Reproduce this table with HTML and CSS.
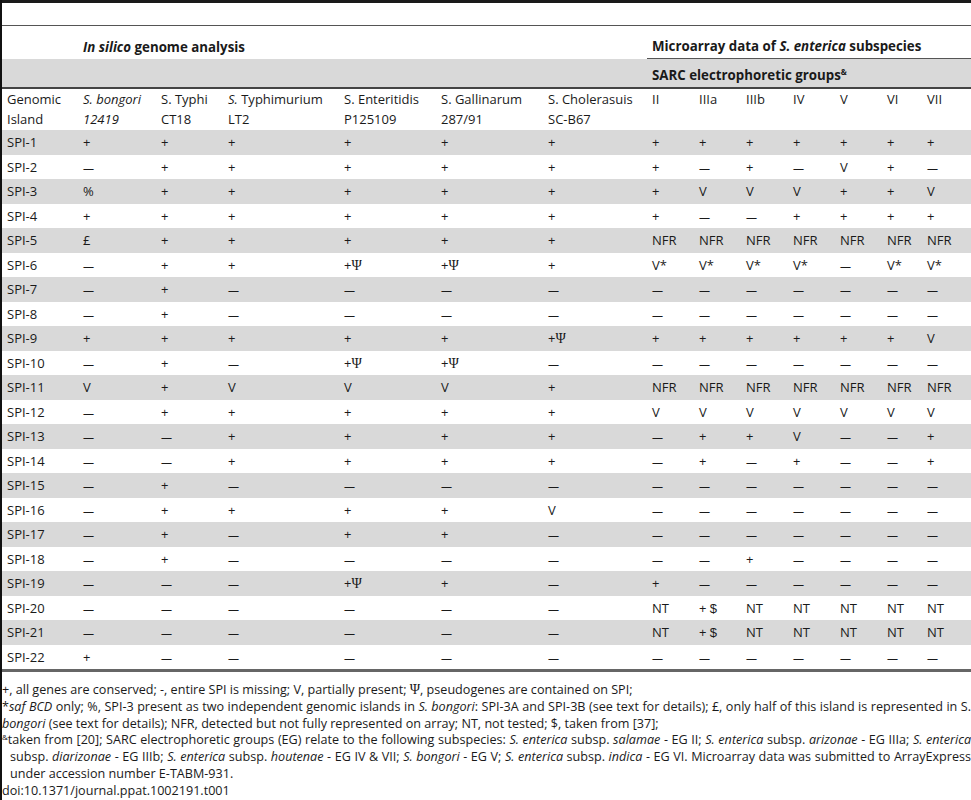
FILE: index.html
```html
<!DOCTYPE html>
<html lang="en">
<head>
  <meta charset="UTF-8">
  <meta name="viewport" content="width=device-width, initial-scale=1.0">
  <title>Table 1 - Distribution of SPIs</title>
  <link rel="stylesheet" href="styles.css">
</head>
<body>
  <table class="spi-table">
    <colgroup>
      <col style="width: 76px">
      <col style="width: 78px">
      <col style="width: 67px">
      <col style="width: 116px">
      <col style="width: 97px">
      <col style="width: 107px">
      <col style="width: 104px">
      <col style="width: 47px">
      <col style="width: 47px">
      <col style="width: 47px">
      <col style="width: 47px">
      <col style="width: 47px">
      <col style="width: 40px">
      <col style="width: 49px">
    </colgroup>
    <thead>
      <tr class="top-gap">
        <th colspan="14"></th>
      </tr>
      <tr class="group-row">
        <th></th>
        <th colspan="6" class="group"><i>In silico</i> genome analysis</th>
        <th colspan="7" class="group micro">Microarray data of <i>S. enterica</i> subspecies</th>
      </tr>
      <tr class="sub-row">
        <th colspan="7"></th>
        <th colspan="7" class="group">SARC electrophoretic groups<sup>&amp;</sup></th>
      </tr>
      <tr class="col-row">
        <th>Genomic Island</th>
        <th><i>S. bongori 12419</i></th>
        <th>S. Typhi CT18</th>
        <th><i>S.</i> Typhimurium LT2</th>
        <th>S. Enteritidis P125109</th>
        <th>S. Gallinarum 287/91</th>
        <th>S. Cholerasuis SC-B67</th>
        <th>II</th>
        <th>IIIa</th>
        <th>IIIb</th>
        <th>IV</th>
        <th>V</th>
        <th>VI</th>
        <th>VII</th>
      </tr>
    </thead>
    <tbody id="spi-body"></tbody>
  </table>

  <div class="notes">
    <p>+, all genes are conserved; -, entire SPI is missing; V, partially present; <span class="psi">&Psi;</span>, pseudogenes are contained on SPI;</p>
    <p>*<i>saf BCD</i> only; %, SPI-3 present as two independent genomic islands in <i>S. bongori</i>: SPI-3A and SPI-3B (see text for details); &pound;, only half of this island is represented in S. <i>bongori</i> (see text for details); NFR, detected but not fully represented on array; NT, not tested; $, taken from [37];</p>
    <p class="hang"><sup>&amp;</sup>taken from [20]; SARC electrophoretic groups (EG) relate to the following subspecies: <i>S. enterica</i> subsp. <i>salamae</i> - EG II; <i>S. enterica</i> subsp. <i>arizonae</i> - EG IIIa; <i>S. enterica</i> subsp. <i>diarizonae</i> - EG IIIb; <i>S. enterica</i> subsp. <i>houtenae</i> - EG IV &amp; VII; <i>S. bongori</i> - EG V; <i>S. enterica</i> subsp. <i>indica</i> - EG VI. Microarray data was submitted to ArrayExpress under accession number E-TABM-931.</p>
    <p>doi:10.1371/journal.ppat.1002191.t001</p>
  </div>

  <script>
    // - = missing, P = +Psi, D = + $
    const rows = [
      ['SPI-1',  '+ + + + + + + + + + + + +'],
      ['SPI-2',  '- + + + + + + - + - V + -'],
      ['SPI-3',  '% + + + + + + V V V + + V'],
      ['SPI-4',  '+ + + + + + + - - + + + +'],
      ['SPI-5',  '£ + + + + + NFR NFR NFR NFR NFR NFR NFR'],
      ['SPI-6',  '- + + P P + V* V* V* V* - V* V*'],
      ['SPI-7',  '- + - - - - - - - - - - -'],
      ['SPI-8',  '- + - - - - - - - - - - -'],
      ['SPI-9',  '+ + + + + P + + + + + + V'],
      ['SPI-10', '- + - P P - - - - - - - -'],
      ['SPI-11', 'V + V V V + NFR NFR NFR NFR NFR NFR NFR'],
      ['SPI-12', '- + + + + + V V V V V V V'],
      ['SPI-13', '- - + + + + - + + V - - +'],
      ['SPI-14', '- - + + + + - + - + - - +'],
      ['SPI-15', '- + - - - - - - - - - - -'],
      ['SPI-16', '- + + + + V - - - - - - -'],
      ['SPI-17', '- + - + + - - - - - - - -'],
      ['SPI-18', '- + - - - - - - + - - - -'],
      ['SPI-19', '- - - P + - + - - - - - -'],
      ['SPI-20', '- - - - - - NT D NT NT NT NT NT'],
      ['SPI-21', '- - - - - - NT D NT NT NT NT NT'],
      ['SPI-22', '+ - - - - - - - - - - - -']
    ];

    function cellHtml(v) {
      if (v === '-') return '<span class="dash">&mdash;</span>';
      if (v === 'P') return '+<span class="psi">&Psi;</span>';
      if (v === 'D') return '+ <span class="dollar">$</span>';
      return v;
    }

    const body = document.getElementById('spi-body');
    rows.forEach(function(row) {
      const tr = document.createElement('tr');
      let html = `<td>${row[0]}</td>`;
      row[1].split(' ').forEach(function(v) {
        html += `<td>${cellHtml(v)}</td>`;
      });
      tr.innerHTML = html;
      body.appendChild(tr);
    });
  </script>
</body>
</html>
```

FILE: styles.css
```css
body {
  margin: 0;
  padding: 0;
  border-left: 2px solid #111;
  min-height: 800px;
  box-sizing: border-box;
  font-family: "Open Sans", "Noto Sans", sans-serif;
  color: #1a1a1a;
  background-color: white;
}

.spi-table {
  width: 969px;
  table-layout: fixed;
  border-collapse: separate;
  border-spacing: 0;
  border-top: 3px solid #1a1a1a;
  font-size: 13px;
}

th, td {
  padding: 0 5px;
  text-align: left;
  vertical-align: middle;
  white-space: nowrap;
}

th {
  font-weight: normal;
}

.top-gap th {
  height: 22px;
  padding: 0;
  border-bottom: 1px solid #555;
}

.group-row th {
  height: 33px;
  vertical-align: bottom;
  padding-bottom: 3px;
  box-sizing: border-box;
}

.group {
  font-weight: bold;
  font-size: 13.3px;
  line-height: 17px;
}

.group-row .micro {
  border-bottom: 1px solid #555;
}

.sub-row th {
  height: 28px;
  background-color: #d9d9d9;
  border-bottom: 2px solid #444;
}

.sub-row sup {
  font-size: 8px;
  vertical-align: 5px;
}

.col-row th {
  white-space: normal;
  line-height: 20px;
  vertical-align: top;
  padding-bottom: 1px;
}

tbody td {
  height: 24.5px;
}

tbody tr:nth-child(odd) td {
  background-color: #d9d9d9;
}

tbody tr:last-child td {
  border-bottom: 3px solid #666;
}

.dash {
  font-size: 11px;
}

.psi {
  font-family: "Liberation Serif", "DejaVu Serif", serif;
  font-size: 14px;
}

.dollar {
  font-family: "Liberation Sans", Arial, sans-serif;
}

.notes {
  margin-top: 10px;
  font-size: 12.6px;
  line-height: 16.8px;
}

.notes p {
  margin: 0;
  text-align: justify;
}

.notes sup {
  font-size: 8px;
  vertical-align: 4px;
  line-height: 0;
}

.hang {
  padding-left: 8px;
  text-indent: -8px;
}
```
